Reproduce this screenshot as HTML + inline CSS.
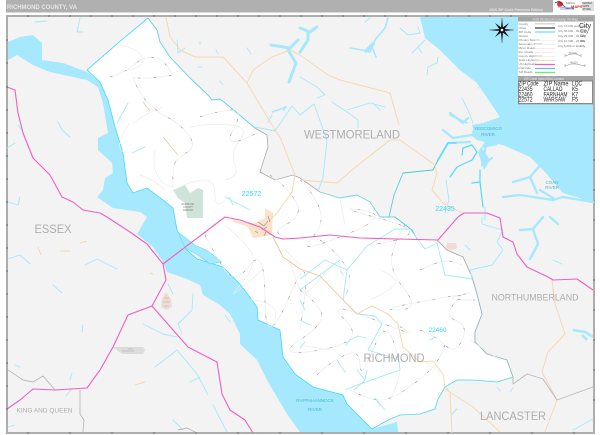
<!DOCTYPE html>
<html><head><meta charset="utf-8"><style>
html,body{margin:0;padding:0;background:#fff;width:600px;height:435px;overflow:hidden}
svg{display:block;font-family:"Liberation Sans",sans-serif}
.w{fill:none;stroke:#a6e8fd;stroke-linecap:round;stroke-linejoin:round}
.b{fill:none;stroke:#4fdcf8;stroke-linejoin:round;stroke-linecap:round}
.z{fill:none;stroke:#a2eafc;stroke-width:.9;stroke-linejoin:round}
.t{fill:none;stroke:#f6d9b0;stroke-width:1;stroke-linejoin:round}
.p{fill:none;stroke:#ef5fc0;stroke-width:1.1;stroke-linejoin:round}
.g{fill:none;stroke:#b9b9b9;stroke-width:.9;stroke-linejoin:round}
.c{fill:#aeaeae;font-size:12px}
.l{font-size:3px;fill:#777}
.i{font-size:6px;fill:#222}
</style></head><body>
<svg width="600" height="435" viewBox="0 0 600 435">
<rect width="600" height="435" fill="#fff"/>
<rect x="6" y="0" width="547" height="12.5" fill="#b0b0b0"/>
<text x="7" y="9" font-size="6.6" font-weight="bold" fill="#e6e6e6" textLength="70" lengthAdjust="spacingAndGlyphs">RICHMOND COUNTY, VA</text>
<text x="489" y="11" font-size="3.6" font-weight="bold" fill="#e4e4e4" textLength="54" lengthAdjust="spacingAndGlyphs">2026 ZIP Code Premium Edition</text>
<ellipse cx="560" cy="4" rx="3" ry="2.6" fill="#d33"/><path d="M555 3l4-2 4 4 3 3 8 1" fill="none" stroke="#333" stroke-width=".7"/>
<path d="M558 7l16 1M560 9l12 0" stroke="#99a8e0" stroke-width="1"/>
<text x="571" y="8" font-size="4" font-weight="bold" fill="#d22">MAPS</text>
<text x="566" y="4" font-size="3" fill="#667">Market</text>
<rect x="582" y="1.500" width="12" height="9.500" fill="#ddd"/>
<text x="582.500" y="4" font-size="2.400" fill="#444">MARKET</text><text x="582.500" y="7" font-size="2.400" fill="#444">MAPS</text><text x="582.500" y="10" font-size="2.400" fill="#444">STORE</text>

<rect x="7" y="16" width="587" height="417" fill="#f3f3f3" stroke="#adadad" stroke-width="2"/>
<path d="M420 17L593 17L593 202L563 193L545 172L530 157L503 145L485 142L477 140L472 125L483 123L500 117L477 83L460 70L440 50L425 38Z" fill="#a6e8fd"/>
<path d="M8 42L20 37L33 35L42 43L42 60L63 63L87 72L100 82L108 100L115 127L123 153L127 183L133 193L147 188L163 200L173 208L177 230L187 250L197 259L223 267L240 284L257 307L258 320L280 330L283 357L295 374L313 387L343 395L347 404L357 414L372 429L397 422L398 432L300 432L287 414L267 380L257 360L240 344L240 334L230 314L220 305L203 295L200 285L187 279L167 272L163 262L153 247L137 234L147 217L140 212L113 208L97 197L103 190L105 178L113 173L112 163L98 150L98 138L108 133L103 103L98 87L87 80L50 72L33 65L17 55L8 60Z" fill="#a6e8fd"/>
<path d="M148 18L157 30L160 42L170 57L190 78L208 95L212 100L220 99L230 107L255 128L267 135L268 147L260 172L275 180L293 175L300 178L320 192L340 198L357 195L370 202L380 217L395 217L412 230L417 239L437 240L447 250L463 257L472 277L477 294L482 314L475 332L475 342L487 354L507 360L513 377L497 382L473 380L457 380L445 387L438 399L435 409L420 414L400 415L390 419L372 429L357 414L347 404L343 395L313 387L295 374L283 357L280 330L258 320L257 307L240 284L223 267L197 259L187 250L177 230L175 217L173 208L163 200L147 188L133 193L127 183L123 153L115 127L108 100L100 82L87 70Z" fill="#fff"/>
<path d="M148 18L157 30L160 42L170 57L190 78L208 95L212 100L220 99L230 107L255 128" fill="none" stroke="#5ed2ea" stroke-width=".9"/>
<path d="M148 18L118 43L87 70L100 82L108 100L115 127L123 153L127 183L133 193L147 188L163 200L173 208L177 230" fill="none" stroke="#55daf6" stroke-width=".9"/>
<path d="M177 230L187 250L197 259L223 267L240 284L257 307L258 320L280 330L283 357L295 374L313 387L343 395L347 404L357 414L372 429L390 419L400 415L420 414L435 409L438 399L445 387L457 380L473 380L497 382L513 377" fill="none" stroke="#45d8f5" stroke-width=".8"/>
<path d="M178 232L195 245L208 251L222 262L210 264L196 254L185 248Z" fill="#a6e8fd" stroke="#45d8f5" stroke-width=".5"/>
<path d="M380 217L395 217L412 230L417 239" fill="none" stroke="#3dc2da" stroke-width=".8"/>
<path d="M472 277L477 294L482 314L475 332L475 342L487 354L507 360L513 377" fill="none" stroke="#8fb6bd" stroke-width=".9"/>
<path d="M437 240L447 250L463 257L472 277" fill="none" stroke="#a9a9a9" stroke-width=".9"/>
<path d="M255 128L267 135L268 147L260 172L275 180L293 175L300 178L320 192" fill="none" stroke="#a9a9a9" stroke-width=".8"/>
<path d="M320 192L340 198L357 195L370 202L380 217" fill="none" stroke="#70d4ea" stroke-width=".9"/>

<path d="M173 190L185 185L190 193L198 188L203 190L203 218L187 218L185 203L178 198Z" fill="#cfe4d8"/>
<path d="M265 208L273 213L272 235L253 238L247 225L257 222L265 218ZM232 219L250 224L248 227L234 222Z" fill="#fbe2c8"/>
<path d="M166 292L171 299L172 307L166 310L161 307L162 298Z" fill="#f0dcd4"/>
<path d="M164 298h5M163 302h7M164 306h5" stroke="#999" stroke-width=".4"/>
<path d="M113 347H143L145 350L143 354H122Z" fill="#dcdcdc"/>
<path d="M122 351h12M128 349h5" stroke="#999" stroke-width=".4"/>
<path d="M447 243L456 243L457 248L452 250L446 249Z" fill="#f0dcd4"/>
<text x="188" y="205" font-size="2.300" fill="#777" text-anchor="middle">RICHMOND</text><text x="188" y="208" font-size="2.300" fill="#777" text-anchor="middle">COUNTY</text><text x="188" y="211" font-size="2.300" fill="#777" text-anchor="middle">AIRPORT</text>

<g fill="none" stroke="#ececec" stroke-width=".7" stroke-linejoin="round">
<path d="M110 77Q125 72 130 68T140 60Q150 56 157 58T173 75Q155 78 147 78T133 78Q138 90 143 97T163 115Q178 122 187 133T190 150Q182 156 177 160T173 187"/>
<path d="M133 123Q148 112 163 107M130 123Q122 133 120 143T130 153M200 117Q215 112 230 110T233 130T257 133M190 127Q210 123 230 125T240 140T235 165T225 180"/>
<path d="M155 150Q152 165 157 175T173 187M140 175Q155 180 165 190M118 45Q128 46 135 50T143 60T130 70M180 187Q195 180 205 180T215 195T225 200"/>
<path d="M205 235Q215 255 225 270T250 265T265 300T290 295T300 330M225 225Q240 238 250 250T240 285T262 270M290 262Q295 278 300 290T330 265"/>
<path d="M300 180Q315 195 320 210T310 240T345 235T362 210T385 220T370 245M405 225Q395 240 392 255T405 290T397 310T430 300T462 295T475 300"/>
<path d="M300 290Q312 298 320 310T300 340T320 350T345 320T375 320T397 325M420 330Q435 335 445 345T462 340T455 320T462 295M445 345Q440 360 430 370T405 390T380 400T350 390"/>
<path d="M317 375Q330 362 345 355T360 365T375 345T400 370M400 370Q398 385 390 400M320 240Q335 250 345 265T343 300M270 175Q285 185 295 200T285 225T300 240M285 250L300 265M340 200L345 225"/>
<path d="M420 270Q430 265 440 262T462 265M380 270Q390 274 395 280T370 300M250 300Q262 300 270 305T275 320M300 345L330 350M415 355L440 372M470 340L500 360"/>
</g>
<g fill="none" stroke="#8d8d8d" stroke-width=".55" stroke-dasharray="2.500 13">
<path d="M110 77Q125 72 130 68T140 60Q150 56 157 58T173 75Q155 78 147 78T133 78Q138 90 143 97T163 115Q178 122 187 133T190 150Q182 156 177 160T173 187"/>
<path d="M200 117Q215 112 230 110T233 130T257 133M205 235Q215 255 225 270T250 265T265 300T290 295T300 330M300 180Q315 195 320 210T310 240T345 235T362 210T385 220T370 245"/>
<path d="M405 225Q395 240 392 255T405 290T397 310T430 300T462 295T475 300M300 290Q312 298 320 310T300 340T320 350T345 320T375 320T397 325M420 330Q435 335 445 345T462 340T455 320T462 295M445 345Q440 360 430 370T405 390T380 400T350 390"/>
<path d="M317 375Q330 362 345 355T360 365T375 345T400 370M320 240Q335 250 345 265T343 300M270 175Q285 185 295 200T285 225T300 240M420 270Q430 265 440 262T462 265"/>
</g>
<g fill="none" stroke="#888" stroke-width=".6"><path d="M258 222l6 4 4-5M262 230l5-3M268 216l2 6M255 231l3 2M264 236l2-4"/></g>

<g class="w" stroke-width=".9">
<path d="M35 22L47 21M80 18L77 32L83 32M58 122L62 130L70 137M7 148L15 143M18 125L22 130M8 202L18 205L20 197"/>
<path d="M177 40L178 53L185 48M200 42L200 44M216 50L218 54M247 48L251 54M198 67L202 67M220 81L223 85M268 122L272 115"/>
<path d="M300 77L317 87L325 95L317 98M332 102L347 112L358 120L358 128M347 110L370 103L385 107M373 103L380 110"/>
<path d="M8 259L20 255L30 264M85 265L97 259L117 269M53 285L62 293M143 324L163 334L177 337M168 284L173 294M193 294L192 310L178 324L182 334"/>
<path d="M155 367L177 350L197 374L208 395M190 382L200 377M213 405L227 432M173 420L183 430M225 315L230 322M83 325L82 332M8 427L15 425M70 380L72 373M66 396L71 390M15 365L20 367"/>
<path d="M465 245L470 250M573 430L593 419M452 414L457 409M497 387L500 391M510 392L513 388M553 260L562 264M300 348L305 342"/>
<path d="M117 123L128 103M132 153L145 147M225 197L250 210M229 197L233 205M340 260L300 290M300 300L305 310M340 270L343 275M300 320L310 325"/>
<path d="M346 345L350 340 358 336 366 338M262 350L268 345M337 360L345 372M354 390L365 380L367 370M365 380L357 370M380 405L375 398L385 410M430 340l5-3"/>
<path d="M446 180L449 200L445 213M478 88L485 83M462 98L468 110L473 123M400 28L408 35L420 33L418 27M425 40L418 47L412 53M418 47L422 53M438 57L437 63L428 67L427 75M365 22L370 18"/>
</g>
<path d="M350 48L362 50L370 52L375 40L385 28L388 18M372 47L376 57M450 115L467 123" class="w" stroke-width="1.600"/>
<path d="M366 51L373 44" class="w" stroke-width="3.500"/>
<g class="w" stroke-width="2.400">
<path d="M513 182L530 177L542 163M530 177L537 193M503 197L520 195L553 200L563 197M540 190L553 198M563 197L593 202"/>
<path d="M520 230L533 229L543 217M533 229L538 244L530 259M550 217L558 224"/>
</g>
<path d="M271 45L290 48L298 40M288 50L296 63L289 82M300 28L310 32L317 27M308 33L308 40L300 52" fill="none" stroke="#a6e8fd" stroke-width="3" stroke-linejoin="round" stroke-linecap="round"/>
<path d="M573 330L585 332L593 337M582 335L587 340" fill="none" stroke="#a6e8fd" stroke-width="2.500"/>
<path d="M272 112L287 107M285 106L284 111" fill="none" stroke="#a6e8fd" stroke-width="1.500"/>
<path d="M475 125L471 135L477 140L485 142L478 152L484 170L490 160L482 148L498 145L484 134Z" fill="#a6e8fd"/>
<path d="M443 130L453 138L472 135M450 113L463 123L468 118M438 160L448 143L470 142M472 135L484 140M486 145L482 165L492 158" class="w" stroke-width="2.200"/>
<g class="b" stroke-width="1.200">
<path d="M462 155L463 148L472 145L477 152L472 160L457 167L450 177"/>
<path d="M480 170L480 182L472 183M480 182L483 207M438 160L448 143L456 143"/>
</g>
<path d="M485 207L485 220" class="w" stroke-width="1"/>
<path d="M403 173L433 170L438 160" fill="none" stroke="#47c6ca" stroke-width=".9"/>
<path d="M389 217L394 195L403 173" fill="none" stroke="#5dcdd8" stroke-width=".9"/>

<g class="z">
<path d="M255 127L275 131L292 106L300 115L314 104L327 140L323 177L318 192"/>
<path d="M300 279L325 260L347 270L343 300M347 270L367 246L395 229L410 229L425 249L437 243L445 275L472 279L470 270L492 265L503 250L497 242L503 230L482 224L482 217"/>
<path d="M358 314L375 316L382 324L368 350L399 360L400 370L357 385L345 390"/>
</g>
<g class="t">
<path d="M166 17L170 37L180 50L195 57L223 57L247 83L275 130L280 137L295 175L292 192L277 213L270 220"/>
<path d="M247 83L253 70L272 57L290 50L300 55L328 75L340 80L390 93L399 125"/>
<path d="M300 180L337 183L352 170L390 140L400 140L435 165L437 173L432 190L443 203L462 213"/>
<path d="M445 389L473 407L500 432M445 387L450 392L452 433M552 280L555 304L565 334L548 352L542 372L557 400L545 432"/>
<path d="M357 314L372 306L388 314L398 324L403 347L420 362L433 361L443 374L445 387"/>
<path d="M38 247l3 8M60 251l10 0M80 243l7-2M135 385l10-3M130 264l1 0M150 273l3 1"/>
</g>
<path d="M273 237L283 257L300 269L320 276L343 300L357 314" fill="none" stroke="#efc48c" stroke-width=".9"/>
<path d="M143 102L150 111M163 137L178 155" fill="none" stroke="#f0c795" stroke-width=".8"/>
<g class="g">
<path d="M8 370L23 380L33 382L43 376L55 390M80 390L80 414L84 420L83 432M178 430L187 428L197 433"/>
<path d="M513 377L513 384L527 374L543 379L557 400L593 387"/>
</g>
<g class="p">
<path d="M7 87L15 90L18 113L23 133L33 158L50 175L62 197L73 202L83 210L100 213L107 217L130 232L147 244L163 264L166 280L152 306L128 315L113 347L100 370L87 388L55 390L33 389L20 400L7 409"/>
<path d="M152 306L188 347L217 362L222 394L230 410L245 420L253 433"/>
<path d="M163 264L225 217L240 220L260 227L275 237L283 239L300 238L330 235L360 238L397 239L438 240L458 217"/>
<path d="M458 217L464 213L487 213L500 218L503 237L513 242L517 254L527 267L548 277L553 280L577 279L593 290"/>
</g>

<rect x="518" y="17" width="75" height="59" fill="#fff"/>
<rect x="518" y="17" width="75" height="4.500" fill="#a5a5a5"/>
<text x="555" y="20.500" font-size="3.200" fill="#e8e8e8" text-anchor="middle">2026 Richmond County, VA Map</text>
<g class="l">
<text x="518.500" y="25">County</text><text x="518.500" y="29">Cities</text><text x="518.500" y="33">ZIP Code</text><text x="518.500" y="37">Streets</text><text x="518.500" y="41">Primary Streets</text><text x="518.500" y="45">Secondary Roads</text><text x="518.500" y="49">Minor Roads</text><text x="518.500" y="53">Ext. Roads</text><text x="518.500" y="57">County Highways</text><text x="518.500" y="61">State Highways</text><text x="518.500" y="65">US Highways</text><text x="518.500" y="69">Interstate</text><text x="518.500" y="73">Toll Roads</text>
<text x="558" y="27">City 10,000 and more</text><text x="558" y="32">City 50,000 - 99,999</text><text x="558" y="37">City 25,000 - 49,999</text><text x="558" y="42">City 10,000 - 24,999</text><text x="558" y="47">City 5,000 or less</text>
</g>
<rect x="535" y="23" width="20" height="1.500" fill="#d8d8d8"/>
<rect x="535" y="27" width="20" height="2" fill="#888"/>
<rect x="535" y="31" width="20" height="2" fill="#a6e8fd"/>
<g stroke-width=".7">
<path d="M535 40.500h20" stroke="#eee"/><path d="M535 44.500h20" stroke="#eee"/><path d="M535 48.500h20" stroke="#f2e6e6"/><path d="M535 52.500h20" stroke="#fbdcdc"/><path d="M535 56.500h20" stroke="#ececec"/>
<path d="M535 60.500h20" stroke="#f6d9b0" stroke-width="1"/><path d="M535 64.500h20" stroke="#ef5fc0" stroke-width="1.200"/><path d="M535 68.500h20" stroke="#66bce8" stroke-width="1.200"/><path d="M535 72.500h20" stroke="#7fe07f" stroke-width="1.500"/>
</g>
<text x="579" y="28" font-size="7" fill="#333">City</text>
<text x="580" y="33" font-size="5" fill="#555">City</text>
<text x="580" y="37" font-size="3.500" fill="#555">City</text><text x="580" y="42" font-size="3" fill="#555">City</text><text x="580" y="47" font-size="3" fill="#555">City</text>
<path d="M565 56l6-2h5l5 2M565 54v3M581 54v3M565 66l6-2h5l9 2M565 64v3M585 64v3" fill="none" stroke="#888" stroke-width=".5"/>
<text x="573" y="54" font-size="2.500" fill="#777" text-anchor="middle">SCALE</text><text x="574" y="63.500" font-size="2.500" fill="#777" text-anchor="middle">MILES</text>

<rect x="518" y="76" width="75" height="28.500" fill="#a5a5a5"/>
<text x="544" y="80" font-size="3.200" fill="#e8e8e8" text-anchor="middle">ZIP Code Index/Grid Locator</text>
<rect x="518.500" y="81" width="74" height="22.500" fill="#fff" stroke="#777" stroke-width=".8"/>
<g class="i" lengthAdjust="spacingAndGlyphs">
<text x="518.500" y="85.500" textLength="20" lengthAdjust="spacingAndGlyphs">ZIP Code</text><text x="543.500" y="85.500" textLength="25" lengthAdjust="spacingAndGlyphs">ZIP Name</text><text x="572" y="85.500" textLength="10" lengthAdjust="spacingAndGlyphs">LOC</text>
<text x="518.500" y="91" textLength="14" lengthAdjust="spacingAndGlyphs">22435</text><text x="543.500" y="91" textLength="19" lengthAdjust="spacingAndGlyphs">CALLAO</text><text x="572" y="91" textLength="6" lengthAdjust="spacingAndGlyphs">K5</text>
<text x="518.500" y="96.300" textLength="14" lengthAdjust="spacingAndGlyphs">22460</text><text x="543.500" y="96.300" textLength="24" lengthAdjust="spacingAndGlyphs">FARNHAM</text><text x="572" y="96.300" textLength="6" lengthAdjust="spacingAndGlyphs">K7</text>
<text x="518.500" y="101.500" textLength="14" lengthAdjust="spacingAndGlyphs">22572</text><text x="543.500" y="101.500" textLength="22" lengthAdjust="spacingAndGlyphs">WARSAW</text><text x="572" y="101.500" textLength="6" lengthAdjust="spacingAndGlyphs">F5</text>
</g>
<g fill="#111">
<path d="M502 18l1 11 11 1-11 1-1 12-1-12-12-1 12-1z" stroke="#333" stroke-width=".2"/>
<path d="M495 23l7 5 7-5-5 7 5 7-7-5-7 5 5-7z"/>
</g>
<circle cx="502" cy="30" r="1.300" fill="#fff"/>

<text class="c" x="352" y="138.500" text-anchor="middle" textLength="96" lengthAdjust="spacingAndGlyphs">WESTMORELAND</text>
<text class="c" x="53" y="233" text-anchor="middle" textLength="37" lengthAdjust="spacingAndGlyphs">ESSEX</text>
<text class="c" x="394" y="362" text-anchor="middle" textLength="61" lengthAdjust="spacingAndGlyphs">RICHMOND</text>
<text class="c" x="513" y="420" text-anchor="middle" textLength="66" lengthAdjust="spacingAndGlyphs">LANCASTER</text>
<text x="535" y="300.500" font-size="8.800" fill="#aeaeae" text-anchor="middle" textLength="87" lengthAdjust="spacingAndGlyphs">NORTHUMBERLAND</text>
<text x="44.500" y="412.500" font-size="6.500" fill="#aeaeae" text-anchor="middle" textLength="56" lengthAdjust="spacingAndGlyphs">KING AND QUEEN</text>
<text x="251.500" y="196" font-size="7" fill="#35d8fb" text-anchor="middle">22572</text>
<text x="445" y="211" font-size="7" fill="#35d8fb" text-anchor="middle">22435</text>
<text x="437.500" y="332" font-size="6.500" fill="#35d8fb" text-anchor="middle">22460</text>
<g font-size="4.500" fill="#44b8d0" text-anchor="middle">
<text x="315" y="402">RAPPAHANNOCK</text><text x="315" y="411">RIVER</text>
<text x="488" y="130">YEOCOMICO</text><text x="488" y="136">RIVER</text>
<text x="552" y="184">COAN</text><text x="552" y="189">RIVER</text>
</g>
<path d="M28 15v2M49 15v2M70 15v2M91 15v2M112 15v2M133 15v2M154 15v2M175 15v2M196 15v2M217 15v2M238 15v2M259 15v2M280 15v2M301 15v2M322 15v2M343 15v2M364 15v2M385 15v2M406 15v2M427 15v2M448 15v2M469 15v2M490 15v2M511 15v2M6 40h2M6 63h2M6 87h2M6 110h2M6 133h2M6 156h2M6 179h2M6 202h2M6 225h2M6 248h2M6 271h2M6 294h2M6 317h2M6 340h2M6 363h2M6 386h2M6 409h2M28 432v2M70 432v2M112 432v2M154 432v2M196 432v2M238 432v2M280 432v2M322 432v2M364 432v2M406 432v2M448 432v2M490 432v2M532 432v2M574 432v2M593 130h2M593 160h2M593 190h2M593 220h2M593 250h2M593 280h2M593 310h2M593 340h2M593 370h2M593 400h2" stroke="#555" stroke-width=".7"/>
</svg>
</body></html>
